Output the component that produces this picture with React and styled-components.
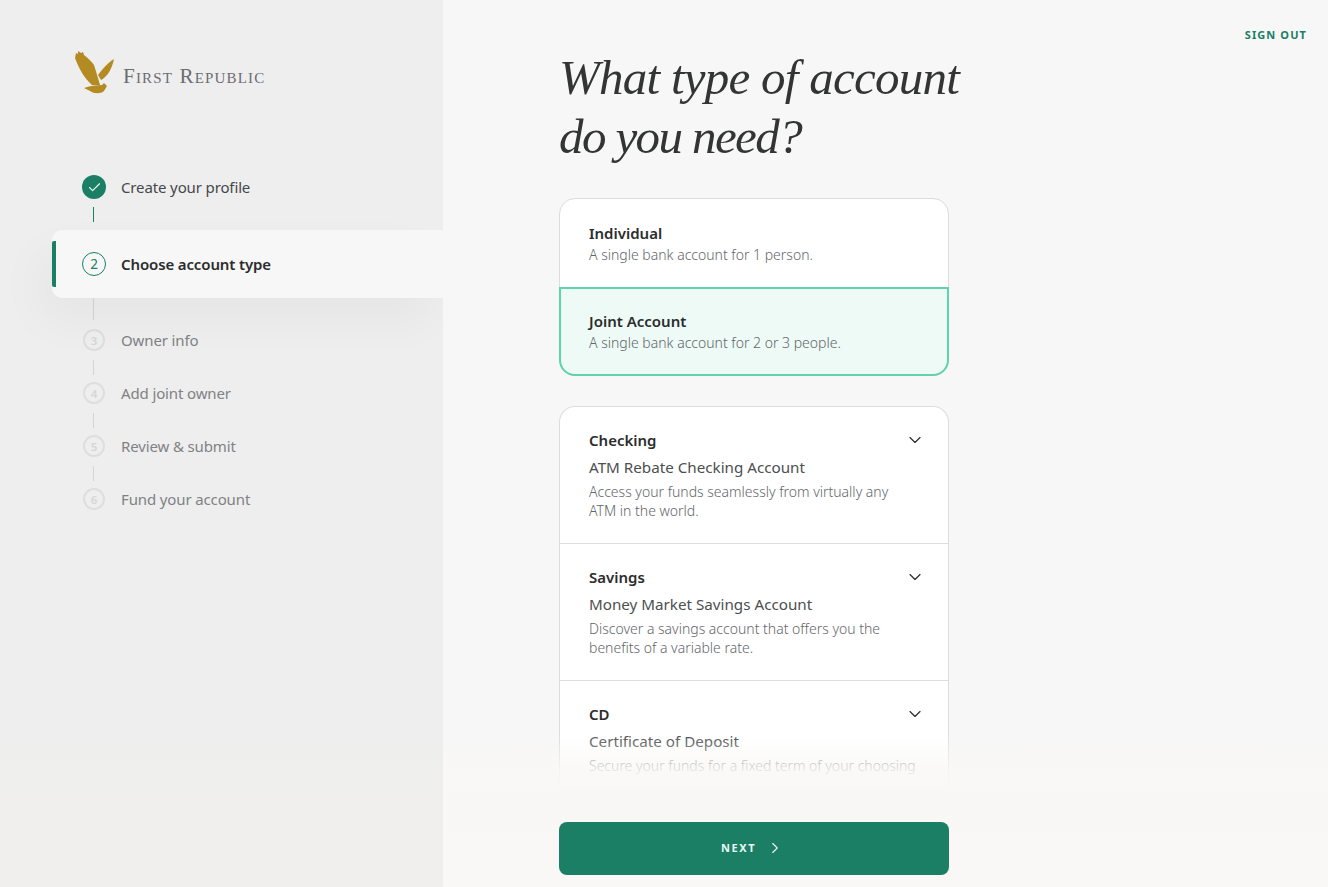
import React from 'react'
import styled, { createGlobalStyle } from 'styled-components'
import { Check, ChevronDown, ChevronRight } from 'lucide-react'

const GlobalStyle = createGlobalStyle`
  html, body {
    margin: 0;
    height: 100%;
    overflow: hidden;
  }
  body {
    font-family: "Noto Sans", "Liberation Sans", sans-serif;
    color: #2b2c2c;
  }
`

const Page = styled.div`
  display: flex;
  height: 887px;
  overflow: hidden;
`

const Sidebar = styled.aside`
  flex: 0 0 443px;
  padding: 50px 0 0 52px;
  box-sizing: border-box;
  background: linear-gradient(180deg, #eeeeee 0%, #eeeeee 80%, #f0efed 100%);
`

const Brand = styled.div`
  display: flex;
  align-items: flex-end;
  gap: 7px;
  height: 44px;
  margin: 0 0 82px 22px;
`

const BrandName = styled.span`
  font-family: "Liberation Serif", serif;
  font-variant: small-caps;
  font-size: 21.2px;
  line-height: 24px;
  letter-spacing: 1.15px;
  color: #6b6d71;
  margin-bottom: 6px;
`

const Step = styled.div`
  display: flex;
  align-items: center;
  gap: ${p => (p.$done ? 15 : 16)}px;
  height: 22px;
  padding-left: ${p => (p.$done ? 30 : 31)}px;
  font-size: 15px;
  letter-spacing: -0.13px;
  color: ${p => (p.$done ? '#45484a' : '#808284')};
`

const ActiveStep = styled(Step)`
  position: relative;
  height: 68px;
  margin-top: 8px;
  padding-left: 30px;
  gap: 15px;
  background: #f7f7f7;
  border-radius: 10px 0 0 10px;
  box-shadow: -12px 22px 48px rgba(0, 0, 0, 0.04);
  color: #2b2c2c;
  font-weight: 600;

  &::before {
    content: '';
    position: absolute;
    left: 0;
    top: 11px;
    bottom: 11px;
    width: 4px;
    border-radius: 2px 0 0 2px;
    background: #1a7f64;
  }
`

const Circle = styled.span`
  flex: 0 0 auto;
  box-sizing: border-box;
  display: flex;
  align-items: center;
  justify-content: center;
  width: 22px;
  height: 22px;
  border-radius: 50%;
  border: 2px solid #dedede;
  font-size: 11.5px;
  font-weight: 600;
  letter-spacing: 0;
  color: #d6d6d6;
`

const DoneCircle = styled(Circle)`
  width: 24px;
  height: 24px;
  border: 0;
  background: #1a7f64;
  color: #f2fbf7;
`

const ActiveCircle = styled(Circle)`
  width: 24px;
  height: 24px;
  border: 1.5px solid #1a7f64;
  font-size: 13.5px;
  font-weight: 400;
  color: #1a7f64;
`

const Connector = styled.div`
  width: 1px;
  height: ${p => p.$height}px;
  margin: ${p => p.$top}px 0 ${p => p.$bottom}px 41px;
  background: ${p => (p.$done ? '#1a7f64' : '#d4d4d4')};
`

const Main = styled.main`
  position: relative;
  flex: 1;
  padding: 48px 0 0 116px;
  box-sizing: border-box;
  background: linear-gradient(180deg, #f7f7f7 0%, #f7f7f7 80%, #f9f8f6 100%);
`

const SignOut = styled.a`
  position: absolute;
  top: 27px;
  right: 21px;
  font-size: 11px;
  line-height: 15px;
  font-weight: 700;
  letter-spacing: 1.1px;
  color: #1a7f64;
`

const Title = styled.h1`
  margin: 0 0 32px;
  font-family: "Liberation Serif", serif;
  font-style: italic;
  font-weight: 400;
  font-size: 49px;
  line-height: 59px;
  letter-spacing: -0.75px;
  color: #333434;
`

const TitleTail = styled.span`
  letter-spacing: -1.6px;
`

const Column = styled.div`
  width: 390px;
`

const Card = styled.div`
  box-sizing: border-box;
  border: 1px solid #dcdcdc;
  border-radius: 16px;
  background: #ffffff;
`

const TypeOption = styled.div`
  box-sizing: border-box;
  height: ${p => (p.$selected ? 89 : 88)}px;
  padding: ${p => (p.$selected ? '21px 28px' : '23px 29px')};
  border: ${p => (p.$selected ? '2px solid #5fd2ae' : '0')};
  background: ${p => (p.$selected ? '#edfaf6' : 'transparent')};
  border-radius: ${p => (p.$selected ? '0 0 16px 16px' : '16px 16px 0 0')};
  margin: ${p => (p.$selected ? '0 -1px -1px' : '0')};
`

const OptionName = styled.div`
  font-size: 15px;
  line-height: 22px;
  font-weight: 600;
  color: #2b2c2c;
`

const OptionNote = styled.div`
  font-size: 14px;
  line-height: 22px;
  font-weight: 300;
  color: #63666a;
`

const ProductCard = styled(Card)`
  height: 382px;
  margin-top: 30px;
  margin-bottom: 34px;
  border-bottom: 0;
  border-radius: 16px 16px 0 0;
  overflow: hidden;
`

const Product = styled.div`
  box-sizing: border-box;
  height: 137px;
  padding: 22px 29px 0;
  border-bottom: 1px solid #dedede;

  &:last-child {
    border-bottom: 0;
  }
`

const ProductHead = styled.div`
  display: flex;
  align-items: center;
  justify-content: space-between;
  margin-right: -6px;
  color: #2b2c2c;
`

const ProductKind = styled.div`
  margin-top: 4px;
  font-size: 15.2px;
  line-height: 24px;
  font-weight: 400;
  color: #4c4f51;
`

const ProductNote = styled.div`
  margin-top: 3px;
  width: 329px;
  font-size: 14px;
  line-height: 19px;
  font-weight: 300;
  color: #63666a;
`

const Fade = styled.div`
  position: absolute;
  left: 0;
  right: 0;
  top: 735px;
  height: 55px;
  background: linear-gradient(180deg, rgba(249, 248, 246, 0) 0%, rgba(249, 248, 246, 0.85) 65%, #f9f8f6 100%);
`

const NextButton = styled.button`
  display: flex;
  align-items: center;
  justify-content: center;
  gap: 10px;
  position: relative;
  box-sizing: border-box;
  width: 390px;
  height: 53px;
  padding: 0 3px 2px 0;
  border: 0;
  border-radius: 8px;
  background: #1a7f64;
  color: #e9f8f2;
  font-family: inherit;
  font-size: 11px;
  font-weight: 700;
  letter-spacing: 1.6px;
`

const Eagle = () => (
  <svg width="42" height="44" viewBox="0 0 42 44" fill="#b48a22">
    <path d="M1 8 L2 3 L4 4 L4 1 L7 3 L9 2 L10 5 C15 9 18 12 20 15 C22 21 24 28 26 35 L18 35 C11 29 5 19 1 8 Z" />
    <path d="M40 9 C35 12 29 18 24 25 L27 30 C33 27 38 19 40 9 Z" />
    <path d="M10 38 C15 36 22 35 28 35 L30 33 L33 36 L30 41 C27 44 20 44 16 41 Z" />
  </svg>
)

const steps = [
  { n: 3, label: 'Owner info' },
  { n: 4, label: 'Add joint owner' },
  { n: 5, label: 'Review & submit' },
  { n: 6, label: 'Fund your account' },
]

const products = [
  {
    name: 'Checking',
    kind: 'ATM Rebate Checking Account',
    note: 'Access your funds seamlessly from virtually any ATM in the world.',
  },
  {
    name: 'Savings',
    kind: 'Money Market Savings Account',
    note: 'Discover a savings account that offers you the benefits of a variable rate.',
  },
  {
    name: 'CD',
    kind: 'Certificate of Deposit',
    note: 'Secure your funds for a fixed term of your choosing',
  },
]

export default function App() {
  return (
    <Page>
      <GlobalStyle />
      <Sidebar>
        <Brand>
          <Eagle />
          <BrandName>First Republic</BrandName>
        </Brand>
        <Step $done>
          <DoneCircle><Check size={15} strokeWidth={1.8} /></DoneCircle>
          Create your profile
        </Step>
        <Connector $done $height={15} $top={9} $bottom={0} />
        <ActiveStep>
          <ActiveCircle>2</ActiveCircle>
          Choose account type
        </ActiveStep>
        <Connector $height={22} $top={0} $bottom={9} />
        {steps.map((s, i) => (
          <React.Fragment key={s.n}>
            <Step>
              <Circle>{s.n}</Circle>
              {s.label}
            </Step>
            {i < steps.length - 1 && <Connector $height={15} $top={9} $bottom={7} />}
          </React.Fragment>
        ))}
      </Sidebar>
      <Main>
        <SignOut>SIGN OUT</SignOut>
        <Title>What type of account<br /><TitleTail>do you need?</TitleTail></Title>
        <Column>
          <Card>
            <TypeOption>
              <OptionName>Individual</OptionName>
              <OptionNote>A single bank account for 1 person.</OptionNote>
            </TypeOption>
            <TypeOption $selected>
              <OptionName>Joint Account</OptionName>
              <OptionNote>A single bank account for 2 or 3 people.</OptionNote>
            </TypeOption>
          </Card>
          <ProductCard>
            {products.map(p => (
              <Product key={p.name}>
                <ProductHead>
                  <OptionName>{p.name}</OptionName>
                  <ChevronDown size={20} strokeWidth={1.4} />
                </ProductHead>
                <ProductKind>{p.kind}</ProductKind>
                <ProductNote>{p.note}</ProductNote>
              </Product>
            ))}
          </ProductCard>
          <Fade />
          <NextButton>
            NEXT
            <ChevronRight size={18} strokeWidth={1.5} />
          </NextButton>
        </Column>
      </Main>
    </Page>
  )
}
